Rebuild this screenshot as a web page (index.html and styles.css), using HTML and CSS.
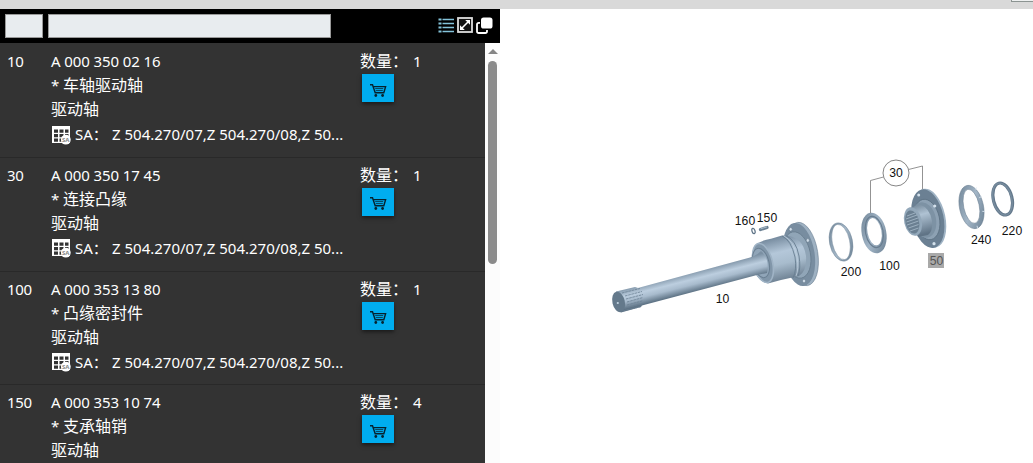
FILE: index.html
```html
<!DOCTYPE html>
<html lang="zh-CN">
<head>
    <meta charset="UTF-8">
    <meta name="viewport" content="width=device-width, initial-scale=1.0">
    <title>驱动轴</title>
    <link rel="stylesheet" href="styles.css">
</head>
<body>
    <!-- Shared icons -->
    <svg class="icon-defs" width="0" height="0">
        <symbol id="icon-cart" viewBox="0 0 18 15">
            <path d="M1 1.7h2.5l2.7 8.1h8.6L16.6 3.6H4.4" fill="none" stroke="#06222e" stroke-width="1.4"/>
            <path d="M6.2 5.6h8M6.8 7.6h7" stroke="#06222e" stroke-width="0.8"/>
            <circle cx="6.8" cy="12.5" r="1.4" fill="#06222e"/>
            <circle cx="13.6" cy="12.5" r="1.4" fill="#06222e"/>
        </symbol>
        <symbol id="icon-sa" viewBox="0 0 20 19">
            <path d="M0 0h18v17H0z" fill="#fff"/>
            <path d="M2 3.5h4v3.2H2zM7.5 3.5h4v3.2h-4zM13 3.5h3.5v3.2H13zM2 8h4v3.2H2zM7.5 8h4v3.2h-4zM13 8h3.5v3.2H13zM2 12.5h4v3.2H2zM7.5 12.5h4v3.2h-4z" fill="#333"/>
            <circle cx="13.8" cy="13.7" r="4.9" fill="#fff"/>
            <text x="13.8" y="15.9" font-size="6" font-weight="bold" text-anchor="middle" fill="#888">SA</text>
        </symbol>
    </svg>

    <div class="top-bar"><div class="top-tab"></div></div>

    <div class="main-container">
        <div class="parts-panel">
            <div class="toolbar">
                <input class="filter filter-pos" type="text">
                <input class="filter filter-text" type="text">
                <div class="toolbar-icons">
                    <svg width="16" height="15" viewBox="0 0 16 15">
                        <path d="M4.5 1.5H16M4.5 5.5H16M4.5 9.5H16M4.5 13.5H16" stroke="#84c3da" stroke-width="1.6"/>
                        <path d="M0.5 1.5h3M0.5 5.5h3M0.5 9.5h3M0.5 13.5h3" stroke="#84c3da" stroke-width="2.2"/>
                    </svg>
                    <svg width="16" height="16" viewBox="0 0 16 16">
                        <rect x="1" y="1" width="14" height="14" fill="#111" stroke="#ddd" stroke-width="1.8"/>
                        <path d="M5 11l6-6" stroke="#fff" stroke-width="1.6"/>
                        <path d="M8.2 3H13v4.8zM3 8.2V13h4.8z" fill="#fff"/>
                    </svg>
                    <svg width="17" height="17" viewBox="0 0 17 17">
                        <path d="M4 5.8H2.8Q1 5.8 1 7.6v6.6Q1 16 2.8 16h6.4q1.8 0 1.8-1.8V13" fill="none" stroke="#fff" stroke-width="1.8"/>
                        <rect x="5" y="0.5" width="11.5" height="11" rx="2.6" fill="#fff"/>
                    </svg>
                </div>
            </div>

            <div class="list-area">
                <div class="parts-list">
                    <div class="part">
                        <div class="part-pos">10</div>
                        <div class="part-info">
                            <div class="part-number">A 000 350 02 16</div>
                            <div class="part-name"><span class="star">*</span>车轴驱动轴</div>
                            <div class="part-name">驱动轴</div>
                            <div class="part-sa"><svg width="20" height="19"><use href="#icon-sa"/></svg><span class="sa-label">SA：</span><span>Z 504.270/07,Z 504.270/08,Z 50...</span></div>
                        </div>
                        <div class="part-order">
                            <div class="quantity">数量：<span>1</span></div>
                            <button class="cart-button"><svg width="18" height="15"><use href="#icon-cart"/></svg></button>
                        </div>
                    </div>
                    <div class="part">
                        <div class="part-pos">30</div>
                        <div class="part-info">
                            <div class="part-number">A 000 350 17 45</div>
                            <div class="part-name"><span class="star">*</span>连接凸缘</div>
                            <div class="part-name">驱动轴</div>
                            <div class="part-sa"><svg width="20" height="19"><use href="#icon-sa"/></svg><span class="sa-label">SA：</span><span>Z 504.270/07,Z 504.270/08,Z 50...</span></div>
                        </div>
                        <div class="part-order">
                            <div class="quantity">数量：<span>1</span></div>
                            <button class="cart-button"><svg width="18" height="15"><use href="#icon-cart"/></svg></button>
                        </div>
                    </div>
                    <div class="part">
                        <div class="part-pos">100</div>
                        <div class="part-info">
                            <div class="part-number">A 000 353 13 80</div>
                            <div class="part-name"><span class="star">*</span>凸缘密封件</div>
                            <div class="part-name">驱动轴</div>
                            <div class="part-sa"><svg width="20" height="19"><use href="#icon-sa"/></svg><span class="sa-label">SA：</span><span>Z 504.270/07,Z 504.270/08,Z 50...</span></div>
                        </div>
                        <div class="part-order">
                            <div class="quantity">数量：<span>1</span></div>
                            <button class="cart-button"><svg width="18" height="15"><use href="#icon-cart"/></svg></button>
                        </div>
                    </div>
                    <div class="part">
                        <div class="part-pos">150</div>
                        <div class="part-info">
                            <div class="part-number">A 000 353 10 74</div>
                            <div class="part-name"><span class="star">*</span>支承轴销</div>
                            <div class="part-name">驱动轴</div>
                        </div>
                        <div class="part-order">
                            <div class="quantity">数量：<span>4</span></div>
                            <button class="cart-button"><svg width="18" height="15"><use href="#icon-cart"/></svg></button>
                        </div>
                    </div>
                </div>
                <div class="scrollbar">
                    <div class="scroll-arrow"></div>
                    <div class="scroll-thumb"></div>
                </div>
            </div>
        </div>

        <!-- Exploded view -->
        <svg class="drawing" width="533" height="454" viewBox="500 9 533 454">
            <defs>
                <linearGradient id="shaft" gradientUnits="userSpaceOnUse" x1="692" y1="271" x2="697" y2="291">
                    <stop offset="0" stop-color="#7b90a3"/>
                    <stop offset="0.4" stop-color="#bccedf"/>
                    <stop offset="0.65" stop-color="#a8bbcd"/>
                    <stop offset="1" stop-color="#5f7486"/>
                </linearGradient>
                <linearGradient id="cup" gradientUnits="userSpaceOnUse" x1="776" y1="236" x2="787" y2="282">
                    <stop offset="0" stop-color="#71869a"/>
                    <stop offset="0.35" stop-color="#b4c7d9"/>
                    <stop offset="0.6" stop-color="#a8bccd"/>
                    <stop offset="1" stop-color="#66798b"/>
                </linearGradient>
                <linearGradient id="hub" x1="0" y1="0" x2="0.2" y2="1">
                    <stop offset="0" stop-color="#6d8192"/>
                    <stop offset="0.4" stop-color="#afc2d3"/>
                    <stop offset="1" stop-color="#607486"/>
                </linearGradient>
                <linearGradient id="ring" x1="0" y1="0" x2="1" y2="1">
                    <stop offset="0" stop-color="#6c8193"/>
                    <stop offset="0.5" stop-color="#a3b6c7"/>
                    <stop offset="1" stop-color="#647a8d"/>
                </linearGradient>
            </defs>

            <!-- 10: shaft with flange -->
            <ellipse cx="802.5" cy="254" rx="15.3" ry="32" transform="rotate(-9 802.5 254)" fill="#9eb1c2" stroke="#6b8093" stroke-width="0.6"/>
            <ellipse cx="799" cy="254.5" rx="15.6" ry="31.8" transform="rotate(-9 799 254.5)" fill="#788da0"/>
            <ellipse cx="797" cy="255" rx="13.5" ry="23.5" transform="rotate(-11 797 255)" fill="#90a5b7" stroke="#667b8d" stroke-width="0.8"/>
            <path d="M757 243.5Q763 240 771 238.7L782 235.5Q803 235 806 256Q807 271 799 276L781 280L768 283.5Q756 281 752 265Q750 250 757 243.5z" fill="url(#cup)"/>
            <path d="M782 236Q791 240 795 257Q797 270 793 278M786 235.7Q796 240 799 256Q801 268 798 276" fill="none" stroke="#687e91" stroke-width="0.9"/>
            <path d="M784 236Q794 241 797 257Q799 269 796 276" fill="none" stroke="#bfd0df" stroke-width="0.8"/>
            <ellipse cx="763" cy="263" rx="9.5" ry="20" transform="rotate(-14 763 263)" fill="#8196a9" stroke="#a0b4c6" stroke-width="1.6"/>
            <ellipse cx="761" cy="263" rx="8" ry="15" transform="rotate(-14 761 263)" fill="#90a5b8" stroke="#6a7f92" stroke-width="1"/>
            <path d="M636 288.5L750 257.5Q756 256 761 251Q770 259 767 273L757 275L642 305.5z" fill="url(#shaft)"/>
            <path d="M616 291.6L635 287Q642 288 643.5 297Q644 303 641 307L621 312.5z" fill="url(#shaft)"/>
            <path d="M622 293l18-4.5M625 296l17-4.5M626 299l17-4.5M627 302l16-4.5M627 305l16-4.3M625 308l17-4.2M623 311l18-4.4" stroke="#6b8093" stroke-width="0.8" stroke-dasharray="2.6 0.7"/>
            <ellipse cx="618.6" cy="302" rx="6.2" ry="10.5" transform="rotate(-13 618.6 302)" fill="#64798b"/>
            <circle cx="617.8" cy="303" r="1.1" fill="#c5d6e4"/>
            <g fill="#d1dee9" stroke="#586c7e" stroke-width="0.4">
                <ellipse cx="790.7" cy="229.3" rx="1.5" ry="1.8"/>
                <ellipse cx="807.8" cy="240.4" rx="1.5" ry="1.8"/>
                <ellipse cx="804" cy="281" rx="1.5" ry="1.8"/>
            </g>

            <!-- 160 / 150: washer and pin -->
            <ellipse cx="753.5" cy="231" rx="1.5" ry="2.7" transform="rotate(-18 753.5 231)" fill="#fff" stroke="#5d7386" stroke-width="1.2"/>
            <path d="M760.5 229.5l6.5-2" stroke="#697f92" stroke-width="3.2" stroke-linecap="round"/>
            <path d="M760.5 228.9l6.5-2" stroke="#a9bccc" stroke-width="1"/>

            <!-- 200 / 100 -->
            <g transform="rotate(-12 841 242)">
                <path fill-rule="evenodd" d="M829.5 242a11.5 19.5 0 1 0 23 0a11.5 19.5 0 1 0 -23 0zM832.3 242a8.7 17.9 0 1 1 17.4 0a8.7 17.9 0 1 1 -17.4 0z" fill="url(#ring)" stroke="#6b8093" stroke-width="0.4"/>
            </g>
            <g transform="rotate(-11 874 233)">
                <path fill-rule="evenodd" d="M861.7 233a12.3 20.6 0 1 0 24.6 0a12.3 20.6 0 1 0 -24.6 0zM867.7 231.8a7 13.8 0 1 1 14 0a7 13.8 0 1 1 -14 0z" fill="url(#ring)"/>
                <ellipse cx="874.5" cy="232" rx="8.8" ry="15.8" fill="none" stroke="#687d90" stroke-width="1.2"/>
            </g>

            <!-- 50: coupling flange -->
            <ellipse cx="929.8" cy="218.2" rx="15.6" ry="30" transform="rotate(-12 929.8 218.2)" fill="#a0b4c5"/>
            <ellipse cx="927.8" cy="218.6" rx="15.8" ry="29.8" transform="rotate(-12 927.8 218.6)" fill="#6b8093"/>
            <ellipse cx="927" cy="219.5" rx="12.5" ry="20.5" transform="rotate(-12 927 219.5)" fill="#8da1b3" stroke="#5c7082" stroke-width="0.8"/>
            <ellipse cx="924" cy="220" rx="12" ry="18" transform="rotate(-12 924 220)" fill="#7d92a4"/>
            <path d="M909 208.5L920 204.5Q930 208 932 221Q933 231 928 235L918 237z" fill="url(#hub)"/>
            <ellipse cx="913" cy="221.5" rx="8.8" ry="14.5" transform="rotate(-13 913 221.5)" fill="#93a8ba"/>
            <ellipse cx="912.3" cy="222" rx="6.8" ry="11.7" transform="rotate(-13 912.3 222)" fill="#6b8092"/>
            <path d="M907 216l8-3M906 219l11-4M906.5 222l11.5-4M907 225l11.5-4M908.5 228l10-3.5M910 231l8.5-3" stroke="#aabdcc" stroke-width="0.8"/>
            <g fill="#d4e1ec">
                <circle cx="918.7" cy="195" r="1.5"/>
                <circle cx="934.7" cy="206" r="1.6"/>
                <circle cx="934" cy="243.7" r="1.6"/>
            </g>

            <!-- 240 / 220 -->
            <g transform="rotate(-12 971.5 207)">
                <path fill-rule="evenodd" d="M959.5 207a12 22 0 1 0 24 0a12 22 0 1 0 -24 0zM963.8 206.3a7.8 17.3 0 1 1 15.6 0a7.8 17.3 0 1 1 -15.6 0z" fill="url(#ring)" stroke="#667b8e" stroke-width="0.5"/>
                <path d="M978.5 190.5l2.2-1.2M981 199.5l2.4-.6M981.2 213.5l2.4.6M973 226.5v2.3" stroke="#d5e1eb" stroke-width="0.9"/>
            </g>
            <g transform="rotate(-14 1002.7 199)">
                <ellipse cx="1002.7" cy="199" rx="9.3" ry="16.3" fill="none" stroke="#64798c" stroke-width="3.2"/>
                <ellipse cx="1002.4" cy="199" rx="9.3" ry="16.3" fill="none" stroke="#778c9e" stroke-width="1.4"/>
            </g>

            <!-- Callouts -->
            <path d="M870.5 213V180.5L883.5 177M908.5 169.5L922.5 166V189" fill="none" stroke="#777" stroke-width="0.8"/>
            <circle cx="896" cy="173" r="13" fill="#fff" stroke="#777" stroke-width="0.9"/>
            <rect x="928" y="253" width="16" height="15" fill="#a9a9a9"/>
            <g class="callout">
                <text x="745" y="225">160</text>
                <text x="767" y="222">150</text>
                <text x="722.5" y="303">10</text>
                <text x="851" y="276">200</text>
                <text x="889.5" y="270">100</text>
                <text x="896" y="177.2">30</text>
                <text class="callout-selected" x="936.5" y="265.4">50</text>
                <text x="981.2" y="244">240</text>
                <text x="1012" y="235">220</text>
            </g>
        </svg>
    </div>
</body>
</html>
```
FILE: styles.css
```css
body {
    margin: 0;
    height: 463px;
    overflow: hidden;
    font-family: "Noto Sans", "Noto Sans CJK SC", sans-serif;
    background: #fff;
}

.icon-defs {
    display: none;
}

.top-bar {
    display: flex;
    justify-content: flex-end;
    height: 9px;
    background: #d9d9d9;
}

.top-tab {
    box-sizing: border-box;
    width: 22px;
    height: 2px;
    background: #eef0f0;
    border-left: 1px solid #8c9492;
    border-bottom: 1px solid #8c9492;
}

.main-container {
    display: flex;
    height: 454px;
}

.parts-panel {
    display: flex;
    flex-direction: column;
    width: 500px;
}

.toolbar {
    box-sizing: border-box;
    display: flex;
    align-items: center;
    gap: 5px;
    height: 34px;
    padding: 0 7px 1px 5px;
    background: #000;
}

.filter {
    box-sizing: border-box;
    height: 24px;
    padding: 0 4px;
    border: 1px solid #999;
    background: #e8ecef;
    outline: none;
}

.filter-pos {
    width: 38px;
}

.filter-text {
    width: 283px;
}

.toolbar-icons {
    display: flex;
    align-items: center;
    gap: 3px;
    margin-left: auto;
    padding-bottom: 1px;
}

.list-area {
    display: flex;
    flex: 1;
    min-height: 0;
}

.parts-list {
    box-sizing: border-box;
    width: 485px;
    padding-top: 1px;
    overflow: hidden;
    background: #333;
    color: #fff;
}

.part {
    box-sizing: border-box;
    display: flex;
    height: 113.8px;
    padding: 5px 0 0 7px;
    border-bottom: 1px solid #292929;
    font-size: 15px;
    line-height: 24px;
}

.part-pos {
    width: 44px;
    letter-spacing: -0.3px;
}

.part-info {
    width: 309px;
    white-space: nowrap;
}

.part-number {
    letter-spacing: -0.1px;
}

.part-name {
    font-size: 16px;
}

.star {
    display: inline-block;
    width: 12px;
    font-size: 15px;
}

.part-sa {
    display: flex;
    align-items: center;
    height: 26px;
}

.part-sa svg {
    margin: 2px 3px 0 1px;
}

.sa-label {
    width: 37px;
}

.quantity {
    font-size: 16px;
}

.quantity span {
    margin-left: 5px;
    font-size: 15px;
}

.cart-button {
    display: flex;
    align-items: center;
    justify-content: center;
    width: 32px;
    height: 28px;
    margin: 1px 0 0 2px;
    padding: 4px 0 0;
    border: none;
    background: #00adef;
    box-shadow: 0 2px 4px rgba(0, 0, 0, 0.5);
}

.scrollbar {
    display: flex;
    flex-direction: column;
    align-items: center;
    width: 15px;
    background: #fcfcfc;
}

.scroll-arrow {
    margin-top: 6px;
    border: 5px solid transparent;
    border-top: none;
    border-bottom: 5px solid #858585;
}

.scroll-thumb {
    width: 9px;
    height: 203px;
    margin-top: 7px;
    border-radius: 5px;
    background: #8b8b8b;
}

.callout {
    font-family: "Liberation Sans", Arial, sans-serif;
    font-size: 12.2px;
    text-anchor: middle;
    fill: #111;
}

.callout-selected {
    fill: #555;
}
```
